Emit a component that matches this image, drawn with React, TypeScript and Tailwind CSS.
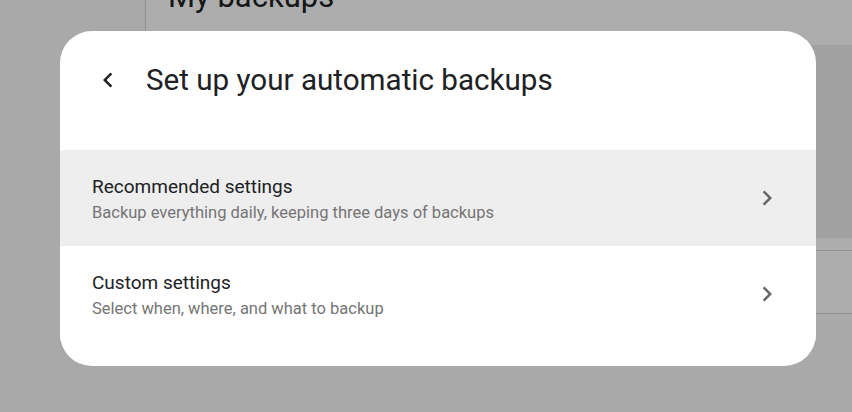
import React from 'react';

const options = [
  { title: 'Recommended settings', desc: 'Backup everything daily, keeping three days of backups', active: true },
  { title: 'Custom settings', desc: 'Select when, where, and what to backup', active: false },
];

const ChevronLeft = () => (
  <svg width="30" height="30" viewBox="0 0 24 24" fill="currentColor">
    <path d="M15.41 7.41L14 6l-6 6 6 6 1.41-1.41L10.83 12z" />
  </svg>
);

const ChevronRight = () => (
  <svg width="30" height="30" viewBox="0 0 24 24" fill="currentColor">
    <path d="M10 6L8.59 7.41 13.17 12l-4.58 4.59L10 18l6-6z" />
  </svg>
);

export default function App() {
  return (
    <div className="relative w-[852px] h-[412px] overflow-hidden bg-white" style={{ fontFamily: 'Roboto, "Noto Sans", sans-serif' }}>
      {/* page behind the dialog */}
      <div className="flex h-full">
        <aside className="w-[146px] bg-[#f9f9f9]">
          <div className="ml-auto w-px h-[100px] bg-[#d6d6d6]" />
        </aside>
        <main className="flex-1 flex flex-col pl-[22px]">
          <h1 className="text-[31px] leading-[36px] -mt-[21px] text-[#202124]">My backups</h1>
          <div className="mt-[30px] h-[193px] bg-[#eeeeee]" />
          <div className="mt-[12px] border-t border-[#d6d6d6] h-[63px]" />
          <div className="flex-1 -ml-[22px] border-t border-[#d6d6d6] bg-[#f9f9f9]" />
        </main>
      </div>

      {/* scrim */}
      <div className="absolute inset-0 bg-black/[0.32]" />

      {/* dialog */}
      <div className="absolute left-[60px] top-[31px] w-[756px] h-[335px] bg-white rounded-[32px] overflow-hidden">
        <div className="h-[119px] flex items-start pt-[31px] pl-[33px]">
          <div className="h-[36px] flex items-center text-[#202124] mr-[23px]">
            <ChevronLeft />
          </div>
          <h2 className="text-[29.6px] leading-[36px] text-[#202124]">Set up your automatic backups</h2>
        </div>
        {options.map((o) => (
          <div
            key={o.title}
            className={`h-[96px] flex items-center pl-[32px] pr-[34px] ${o.active ? 'bg-[#eeeeee]' : 'bg-white'}`}
          >
            <div className="flex-1 pt-[3px]">
              <div className="text-[19px] leading-[24px] text-[#202124]">{o.title}</div>
              <div className="text-[16.5px] leading-[24px] text-[#757575] mt-[2px]">{o.desc}</div>
            </div>
            <div className="text-[#666666]">
              <ChevronRight />
            </div>
          </div>
        ))}
      </div>
    </div>
  );
}
